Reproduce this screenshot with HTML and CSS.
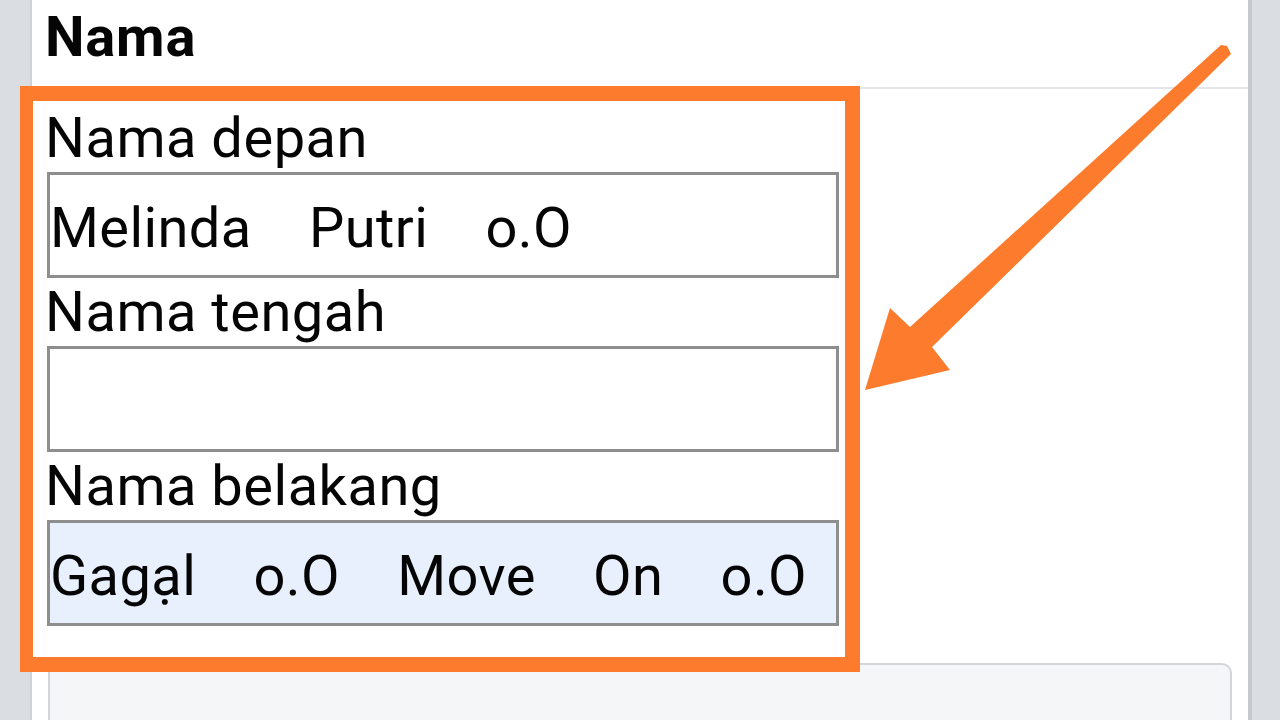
FILE: index.html
```html
<!DOCTYPE html>
<html lang="id">
<head>
    <meta charset="UTF-8">
    <meta name="viewport" content="width=device-width, initial-scale=1.0">
    <title>Nama</title>
    <link rel="stylesheet" href="styles.css">
</head>
<body>
    <div class="panel">
        <div class="panel-head">
            <h2>Nama</h2>
        </div>

        <form class="name-form">
            <div class="field">
                <label for="first-name">Nama depan</label>
                <input type="text" id="first-name" value="Melinda    Putri    o.O">
            </div>
            <div class="field">
                <label for="middle-name">Nama tengah</label>
                <input type="text" id="middle-name" value="">
            </div>
            <div class="field">
                <label for="last-name">Nama belakang</label>
                <input type="text" id="last-name" class="autofilled" value="Gagạl    o.O    Move    On    o.O">
            </div>
        </form>

        <div class="notice-card"></div>

        <!-- annotation drawn over the screenshot -->
        <div class="highlight-box"></div>
        <svg class="pointer-arrow" width="1280" height="720" viewBox="0 0 1280 720">
            <polygon points="1221,45 1227,46 1231,54 932,347 950,370 865,390 890,308 910,327" fill="#fc7b2c"/>
        </svg>
    </div>
</body>
</html>
```

FILE: styles.css
```css
body {
    margin: 0;
    padding: 0;
    background-color: #dadde1;
    font-family: Roboto, "Noto Sans", Arial, sans-serif;
    color: #050505;
    overflow: hidden;
}

.panel {
    margin-left: 30px;
    width: 1216px;
    height: 720px;
    background-color: #fff;
    border-left: 2px solid #cfd2d6;
    border-right: 4px solid #c6c9ce;
}

.panel-head {
    height: 87px;
    padding: 0 13px;
    border-bottom: 2px solid #e4e6e9;
}

.panel-head h2 {
    margin: 0;
    padding-top: 7px;
    font-size: 56px;
    line-height: 61px;
    font-weight: bold;
    letter-spacing: 0.8px;
}

.name-form {
    padding: 15px 13px 0;
}

.field label {
    display: block;
    font-size: 56px;
    line-height: 68px;
    letter-spacing: 0.5px;
}

.field input {
    display: block;
    box-sizing: border-box;
    width: 792px;
    height: 106px;
    margin: 0 0 0 2px;
    padding: 6px 0 0 0;
    border: 3px solid #8e8e8e;
    border-radius: 0;
    background-color: #fff;
    font-family: Roboto, "Noto Sans", Arial, sans-serif;
    font-size: 56px;
    letter-spacing: 0.42px;
    color: #050505;
    outline: none;
}

.field input.autofilled {
    background-color: #e8f0fe;
}

.notice-card {
    margin: 37px 0 0 16px;
    width: 1184px;
    height: 200px;
    box-sizing: border-box;
    background-color: #f5f6f7;
    border: 2px solid #d3d5d8;
    border-radius: 10px;
}

.highlight-box {
    position: absolute;
    left: 20px;
    top: 86px;
    width: 840px;
    height: 586px;
    box-sizing: border-box;
    border-style: solid;
    border-color: #fc7b2c;
    border-width: 15px 15px 15px 13px;
    pointer-events: none;
}

.pointer-arrow {
    position: absolute;
    left: 0;
    top: 0;
    pointer-events: none;
}
```
